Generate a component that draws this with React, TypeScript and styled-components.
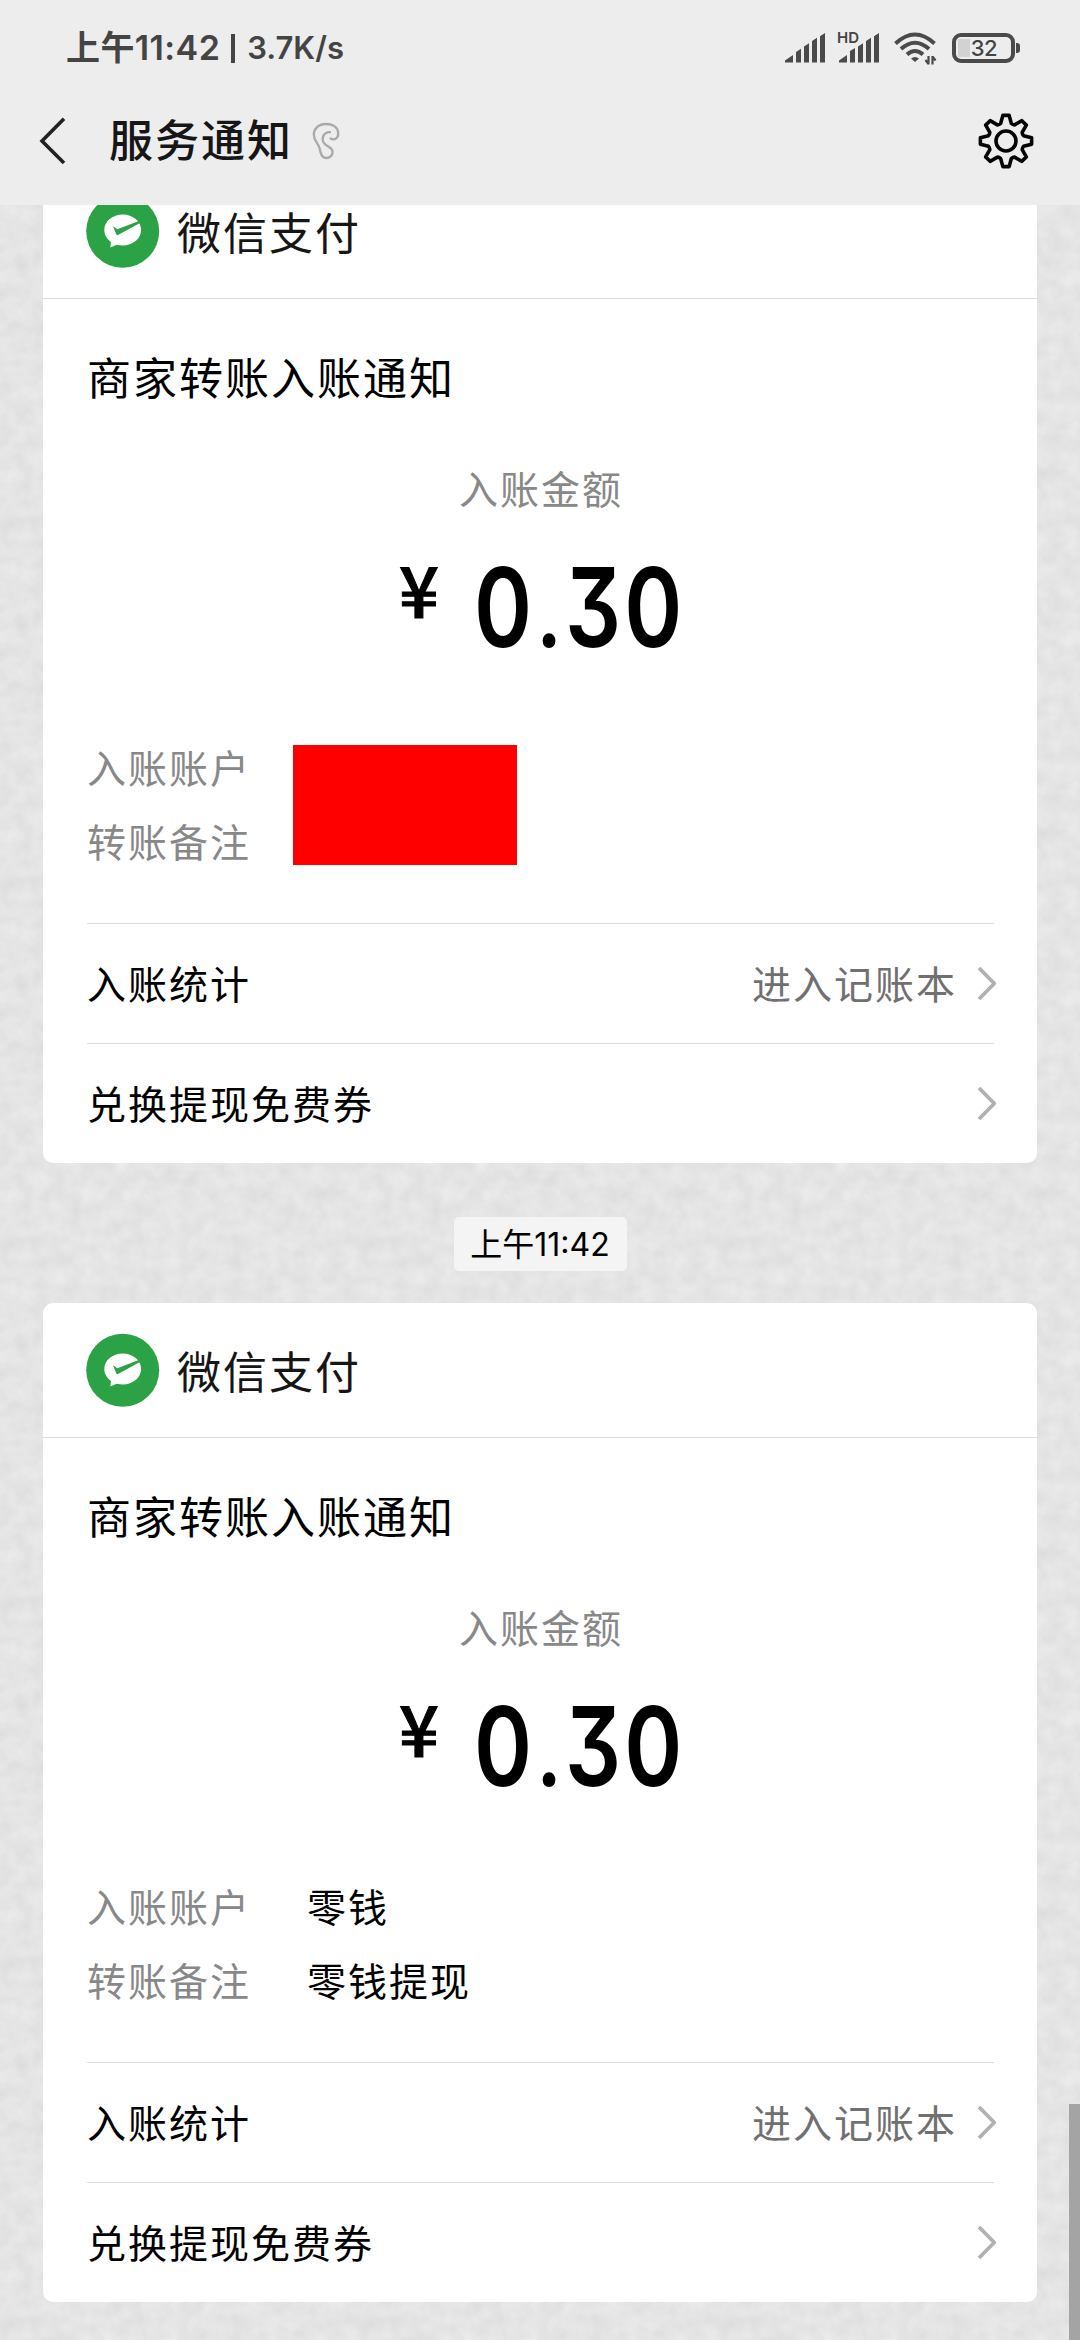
import React from "react";
import styled, { createGlobalStyle } from "styled-components";

const GlobalStyle = createGlobalStyle`
  * { box-sizing: border-box; }
  html, body { margin: 0; padding: 0; background: #ededed; }
  body { font-family: Inter, "Noto Sans CJK SC", sans-serif; color: #000; }
`;

const grain =
  "url(\"data:image/svg+xml,%3Csvg xmlns='http://www.w3.org/2000/svg' width='360' height='360'%3E%3Cfilter id='n' x='0' y='0' width='100%25' height='100%25' color-interpolation-filters='sRGB'%3E%3CfeTurbulence type='fractalNoise' baseFrequency='0.06' numOctaves='3' seed='8' stitchTiles='stitch'/%3E%3CfeColorMatrix values='0.07 0 0 0 0.86 0.07 0 0 0 0.86 0.07 0 0 0 0.86 0 0 0 0 1'/%3E%3C/filter%3E%3Crect width='360' height='360' filter='url(%23n)'/%3E%3C/svg%3E\")";

const Screen = styled.main`
  width: 1080px;
  height: 2340px;
  display: flex;
  flex-direction: column;
  overflow: hidden;
  position: relative;
`;

const TopBar = styled.header`
  flex: none;
  height: 205px;
  background: #ededed;
`;

const StatusBar = styled.div`
  height: 96px;
  padding: 0 60px 0 66px;
  display: flex;
  align-items: center;
  justify-content: space-between;
  color: #444;
`;

const StatusText = styled.div`
  display: flex;
  align-items: center;
  font-weight: 600;
  line-height: 40px;
  white-space: nowrap;
`;

const Clock = styled.span`
  font-size: 34px;
  letter-spacing: 0.4px;
`;

const StatusDivider = styled.span`
  width: 4px;
  height: 29px;
  margin: 0 12px 0 11px;
  background: #444;
`;

const Speed = styled.span`
  font-size: 31px;
`;

const StatusIcons = styled.div`
  display: flex;
  align-items: center;
  svg { display: block; flex: none; }
`;

const HdSignal = styled.div`
  position: relative;
  margin: 0 15px 0 13px;
`;

const HdTag = styled.span`
  position: absolute;
  left: -1px;
  top: -3px;
  font: 600 15px/15px Inter, sans-serif;
`;

const Battery = styled.div`
  display: flex;
  align-items: center;
  margin-left: 15px;
`;

const BatteryShell = styled.div`
  width: 63px;
  height: 30px;
  border: 4px solid #4a4a4a;
  border-radius: 9px;
  padding: 2px 2px 2px 3px;
  background: linear-gradient(90deg, #d2d2d2 12px, transparent 12px) 2px 2px / 53px 18px no-repeat;
  font: 500 22px/18px Inter, sans-serif;
  text-align: center;
  letter-spacing: -0.5px;
`;

const BatteryTip = styled.div`
  width: 4px;
  height: 10px;
  margin-left: 1px;
  border-radius: 0 3px 3px 0;
  background: #4a4a4a;
`;

const NavBar = styled.div`
  height: 90px;
  padding: 0 46px 0 39px;
  display: flex;
  align-items: center;
  svg { display: block; flex: none; }
`;

const NavTitle = styled.h1`
  margin: 0 19px 0 42px;
  font-size: 44px;
  font-weight: 500;
  letter-spacing: 2px;
  line-height: 60px;
  color: #161616;
`;

const NavSpacer = styled.div`
  flex: 1;
`;

const Feed = styled.section`
  flex: 1;
  min-height: 0;
  overflow: hidden;
  display: flex;
  flex-direction: column;
  align-items: center;
  background: #e4e4e4 ${grain};
`;

const Card = styled.article<{ $scrolled?: boolean }>`
  flex: none;
  width: 994px;
  height: 999px;
  margin-top: ${(p) => (p.$scrolled ? "-41px" : "0")};
  display: flex;
  flex-direction: column;
  border-radius: 10px;
  background: #fff;
`;

const CardHeader = styled.div`
  height: 135px;
  padding-left: 43px;
  display: flex;
  align-items: center;
  gap: 17px;
  border-bottom: 1px solid #dcdcdc;
  svg { display: block; }
`;

const Sender = styled.span`
  padding-top: 5px;
  font-size: 44px;
  letter-spacing: 2px;
  line-height: 60px;
  color: #161616;
`;

const CardBody = styled.div`
  flex: 1;
  padding: 50px 44px 0;
  display: flex;
  flex-direction: column;
`;

const CardTitle = styled.h2`
  margin: 0;
  font-size: 44px;
  font-weight: 400;
  letter-spacing: 2px;
  line-height: 60px;
`;

const AmountLabel = styled.div`
  margin-top: 53px;
  padding-left: 2px;
  text-align: center;
  font-size: 39px;
  letter-spacing: 2px;
  line-height: 56px;
  color: #888;
`;

const Amount = styled.div`
  margin-top: 35px;
  height: 108px;
  display: flex;
  justify-content: center;
`;

const Currency = styled.span`
  width: 75px;
  font: 500 70px/70px "Noto Sans CJK SC", sans-serif;
  -webkit-text-stroke: 1px #000;
`;

const Figure = styled.span`
  width: 207px;
  font: 600 110px/108px Inter, sans-serif;
  font-feature-settings: "cv09" 1;
  letter-spacing: 4px;
  white-space: nowrap;
  transform: scaleX(0.8);
  transform-origin: left center;
`;

const DecimalPoint = styled.span`
  margin: 0 1px 0 3px;
  font-family: Roboto, sans-serif;
  font-size: 100px;
  font-weight: 700;
`;

const Details = styled.dl`
  margin: 71px 0 0;
  display: grid;
  grid-template-columns: 220px 1fr;
  grid-auto-rows: 74px;
  font-size: 39px;
  letter-spacing: 2px;
  line-height: 74px;
`;

const Term = styled.dt`
  grid-column: 1;
  color: #888;
`;

const Value = styled.dd`
  grid-column: 2;
  margin: 0;
`;

const Redaction = styled.dd`
  grid-column: 2;
  grid-row: 1 / span 2;
  width: 224px;
  height: 120px;
  margin: 13px 0 0 -14px;
  background: #fe0000;
`;

const LinkRow = styled.div`
  flex: none;
  height: 120px;
  margin: 0 43px 0 44px;
  padding-top: 1px;
  display: flex;
  align-items: center;
  border-top: 1px solid #dcdcdc;
  font-size: 39px;
  letter-spacing: 2px;
  line-height: 60px;
  svg { display: block; margin-right: -3px; }
`;

const LinkLabel = styled.span`
  flex: 1;
  padding-top: 1px;
`;

const LinkHint = styled.span`
  margin-right: 20px;
  padding-top: 1px;
  color: #707070;
`;

const TimeChip = styled.time`
  flex: none;
  width: 173px;
  height: 54px;
  margin: 54px 0 32px;
  border-radius: 5px;
  background: #f4f4f4;
  text-align: center;
  font-size: 32px;
  line-height: 55px;
  white-space: nowrap;
`;

const ScrollThumb = styled.div`
  position: absolute;
  right: 0;
  bottom: 0;
  width: 11px;
  height: 236px;
  background: #a4a4a4;
`;

const SignalIcon = () => (
  <svg width="40" height="30" viewBox="0 0 40 30" fill="#4a4a4a">
    <path d="M0 29.5v-2L8 22v7.500z M11 29.500V19l5-3.300v13.800z M19 29.500V13.500l5-3.300v19.300z M27 29.500V8l5-3.300v24.800z M35 29.500V3.300L40 0v29.500z" />
  </svg>
);

const HdSignalIcon = () => (
  <svg width="41" height="30" viewBox="0 0 41 30" fill="#4a4a4a">
    <path d="M1 29.500v-2L9 22v7.500z M12 29.500V18l5-3v14.500z M20 29.500V13.500l5-3.300v19.300z M28 29.500V8l5-3.300v24.800z M36 29.500V3.300L41 0v29.500z" />
  </svg>
);

const WifiIcon = () => (
  <svg width="43" height="33" viewBox="0 0 43 33" fill="none" stroke="#4a4a4a" strokeWidth="4">
    <path d="M1.500 11.500Q21 -6.500 40.500 11.500 M7 17Q21 4.500 35 17 M13 22.500Q21 15.500 29 22.500" />
    <path d="M17 26.500Q21 23.500 25 26.500L21 30z" fill="#4a4a4a" stroke="none" />
    <path d="M34.500 24v8.500 M38.500 24v8.500 M34.500 32l-3-4 M38.500 24.500l3 4" strokeWidth="2.200" />
  </svg>
);

const BackIcon = () => (
  <svg width="28" height="48" viewBox="0 0 28 48" fill="none" stroke="#222" strokeWidth="3.600">
    <path d="M25 1.800L3 24L25 46" />
  </svg>
);

const EarIcon = () => (
  <svg width="28" height="38" viewBox="0 0 28 38" fill="none" stroke="#a9a9a9" strokeWidth="2.300" strokeLinecap="round">
    <path d="M18.500 16.500C23 19 26.500 15.500 26.200 11C25.800 5 20.500 2 14 2C6.500 2 1.800 7 1.800 12.500C1.800 19 6 20.500 7.500 26C8.500 31 9.500 36 14.500 36C19 36 21 32.500 20.500 29C20 24.500 12 24.500 10.800 18.500C10 13 14 9.500 18 10.200" />
  </svg>
);

const polar = (r: number, deg: number) => {
  const a = (deg * Math.PI) / 180;
  return `${(28 + r * Math.sin(a)).toFixed(2)} ${(28 - r * Math.cos(a)).toFixed(2)}`;
};

const gearOutline =
  Array.from({ length: 8 }, (_, i) => {
    const c = i * 45;
    return `${i === 0 ? "M" : "L"}${polar(18.3, c - 17)} L${polar(25.8, c - 7)} L${polar(25.8, c + 7)} L${polar(18.3, c + 17)} Q${polar(17.6, c + 22.5)} ${polar(18.3, c + 28)}`;
  }).join(" ") + "Z";

const GearIcon = () => (
  <svg width="56" height="56" viewBox="0 0 56 56" fill="none" stroke="#050505" strokeWidth="3.600" strokeLinejoin="round">
    <path d={gearOutline} />
    <circle cx="28" cy="28" r="10" />
  </svg>
);

const PayLogo = () => (
  <svg width="74" height="74" viewBox="0 0 74 74">
    <circle cx="36.700" cy="37.300" r="36.500" fill="#2ba245" />
    <path
      d="M36.700 20.600C26.500 20.600 18.300 27.500 18.300 36C18.300 40.800 20.900 45.100 25 47.900L24.300 53.500L30.700 50.700C32.600 51.300 34.600 51.500 36.700 51.500C46.900 51.500 55.100 44.500 55.100 36C55.100 27.500 46.900 20.600 36.700 20.600Z"
      fill="#fff"
    />
    <path d="M27 32.200L31.400 35.300L52.800 27L54 29L32 41Q31 41.500 30.400 40.400Z" fill="#2ba245" />
  </svg>
);

const ChevronIcon = () => (
  <svg width="20" height="36" viewBox="0 0 20 36" fill="none" stroke="#b1b1b1" strokeWidth="3.800">
    <path d="M2 2L17.300 17.500L2 33" strokeLinejoin="round" />
  </svg>
);

interface NoticeProps {
  scrolled?: boolean;
  details?: [string, string];
}

const Notice = ({ scrolled, details }: NoticeProps) => (
  <Card $scrolled={scrolled}>
    <CardHeader>
      <PayLogo />
      <Sender>微信支付</Sender>
    </CardHeader>
    <CardBody>
      <CardTitle>商家转账入账通知</CardTitle>
      <AmountLabel>入账金额</AmountLabel>
      <Amount>
        <Currency>¥</Currency>
        <Figure>
          0<DecimalPoint>.</DecimalPoint>30
        </Figure>
      </Amount>
      <Details>
        <Term>入账账户</Term>
        {details ? <Value>{details[0]}</Value> : <Redaction />}
        <Term>转账备注</Term>
        {details && <Value>{details[1]}</Value>}
      </Details>
    </CardBody>
    <LinkRow>
      <LinkLabel>入账统计</LinkLabel>
      <LinkHint>进入记账本</LinkHint>
      <ChevronIcon />
    </LinkRow>
    <LinkRow>
      <LinkLabel>兑换提现免费券</LinkLabel>
      <ChevronIcon />
    </LinkRow>
  </Card>
);

export default function App() {
  return (
    <Screen>
      <GlobalStyle />
      <TopBar>
        <StatusBar>
          <StatusText>
            <Clock>上午11:42</Clock>
            <StatusDivider />
            <Speed>3.7K/s</Speed>
          </StatusText>
          <StatusIcons>
            <SignalIcon />
            <HdSignal>
              <HdTag>HD</HdTag>
              <HdSignalIcon />
            </HdSignal>
            <WifiIcon />
            <Battery>
              <BatteryShell>32</BatteryShell>
              <BatteryTip />
            </Battery>
          </StatusIcons>
        </StatusBar>
        <NavBar>
          <BackIcon />
          <NavTitle>服务通知</NavTitle>
          <EarIcon />
          <NavSpacer />
          <GearIcon />
        </NavBar>
      </TopBar>
      <Feed>
        <Notice scrolled />
        <TimeChip>上午11:42</TimeChip>
        <Notice details={["零钱", "零钱提现"]} />
      </Feed>
      <ScrollThumb />
    </Screen>
  );
}
